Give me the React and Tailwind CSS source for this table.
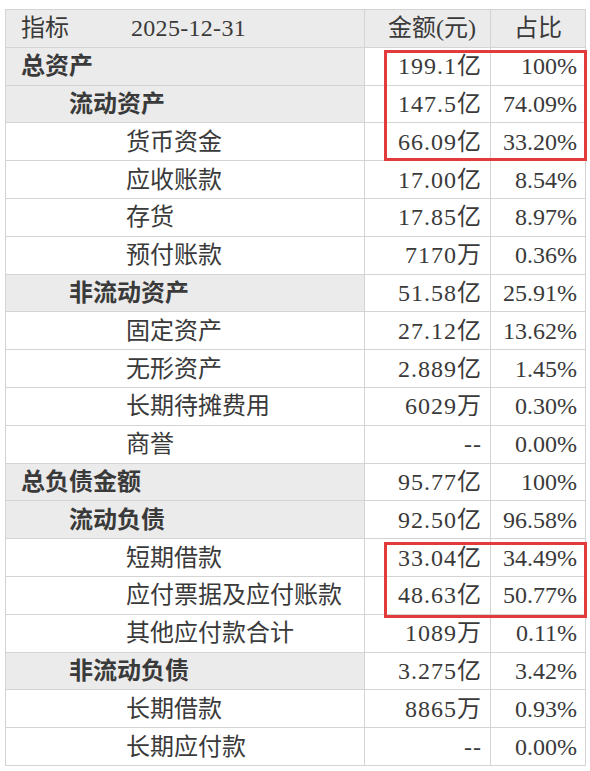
import React from 'react';

const rows = [
    { label: '总资产', level: 0, bold: true, amount: '199.1亿', pct: '100%' },
    { label: '流动资产', level: 1, bold: true, amount: '147.5亿', pct: '74.09%' },
    { label: '货币资金', level: 2, amount: '66.09亿', pct: '33.20%' },
    { label: '应收账款', level: 2, amount: '17.00亿', pct: '8.54%' },
    { label: '存货', level: 2, amount: '17.85亿', pct: '8.97%' },
    { label: '预付账款', level: 2, amount: '7170万', pct: '0.36%' },
    { label: '非流动资产', level: 1, bold: true, amount: '51.58亿', pct: '25.91%' },
    { label: '固定资产', level: 2, amount: '27.12亿', pct: '13.62%' },
    { label: '无形资产', level: 2, amount: '2.889亿', pct: '1.45%' },
    { label: '长期待摊费用', level: 2, amount: '6029万', pct: '0.30%' },
    { label: '商誉', level: 2, amount: '--', pct: '0.00%' },
    { label: '总负债金额', level: 0, bold: true, amount: '95.77亿', pct: '100%' },
    { label: '流动负债', level: 1, bold: true, amount: '92.50亿', pct: '96.58%' },
    { label: '短期借款', level: 2, amount: '33.04亿', pct: '34.49%' },
    { label: '应付票据及应付账款', level: 2, amount: '48.63亿', pct: '50.77%' },
    { label: '其他应付款合计', level: 2, amount: '1089万', pct: '0.11%' },
    { label: '非流动负债', level: 1, bold: true, amount: '3.275亿', pct: '3.42%' },
    { label: '长期借款', level: 2, amount: '8865万', pct: '0.93%' },
    { label: '长期应付款', level: 2, amount: '--', pct: '0.00%' },
];

const indent = ['pl-[15px]', 'pl-[63px]', 'pl-[120px]'];

export default function App() {
    return (
        <div
            className="relative min-h-[771px] bg-white pt-[9px] pl-[5px] text-[24px] text-[#3a3a3a]"
            style={{ fontFamily: '"Liberation Serif", "Noto Sans CJK SC", serif' }}
        >
            <table className="border-collapse">
                <thead>
                    <tr className="h-[37.8px] bg-[#ebebeb]">
                        <td className="w-[359px] border border-[#d4d4d4] pl-[15px] leading-none">
                            <div className="flex items-center">
                                <span className="w-[110px]">指标</span>
                                <span className="tracking-[0.3px]">2025-12-31</span>
                            </div>
                        </td>
                        <td className="w-[126px] border border-[#d4d4d4] pr-[14px] text-right leading-none">金额(元)</td>
                        <td className="w-[95px] border border-[#d4d4d4] text-center leading-none">占比</td>
                    </tr>
                </thead>
                <tbody>
                    {rows.map((row) => (
                        <tr key={row.label} className="h-[37.8px]">
                            <td
                                className={`border border-[#d4d4d4] leading-none ${indent[row.level]} ${row.bold ? 'bg-[#ebebeb] font-bold' : ''}`}
                            >
                                {row.label}
                            </td>
                            <td className="border border-[#d4d4d4] pr-[8px] text-right leading-none tracking-[1px]">{row.amount}</td>
                            <td className="border border-[#d4d4d4] pr-[8px] text-right leading-none">{row.pct}</td>
                        </tr>
                    ))}
                </tbody>
            </table>

            {/* highlight boxes */}
            <div className="absolute left-[384px] top-[50px] h-[111px] w-[203px] border-[3px] border-[#e23b3b]" />
            <div className="absolute left-[384px] top-[542px] h-[76px] w-[203px] border-[3px] border-[#e23b3b]" />
        </div>
    );
}
